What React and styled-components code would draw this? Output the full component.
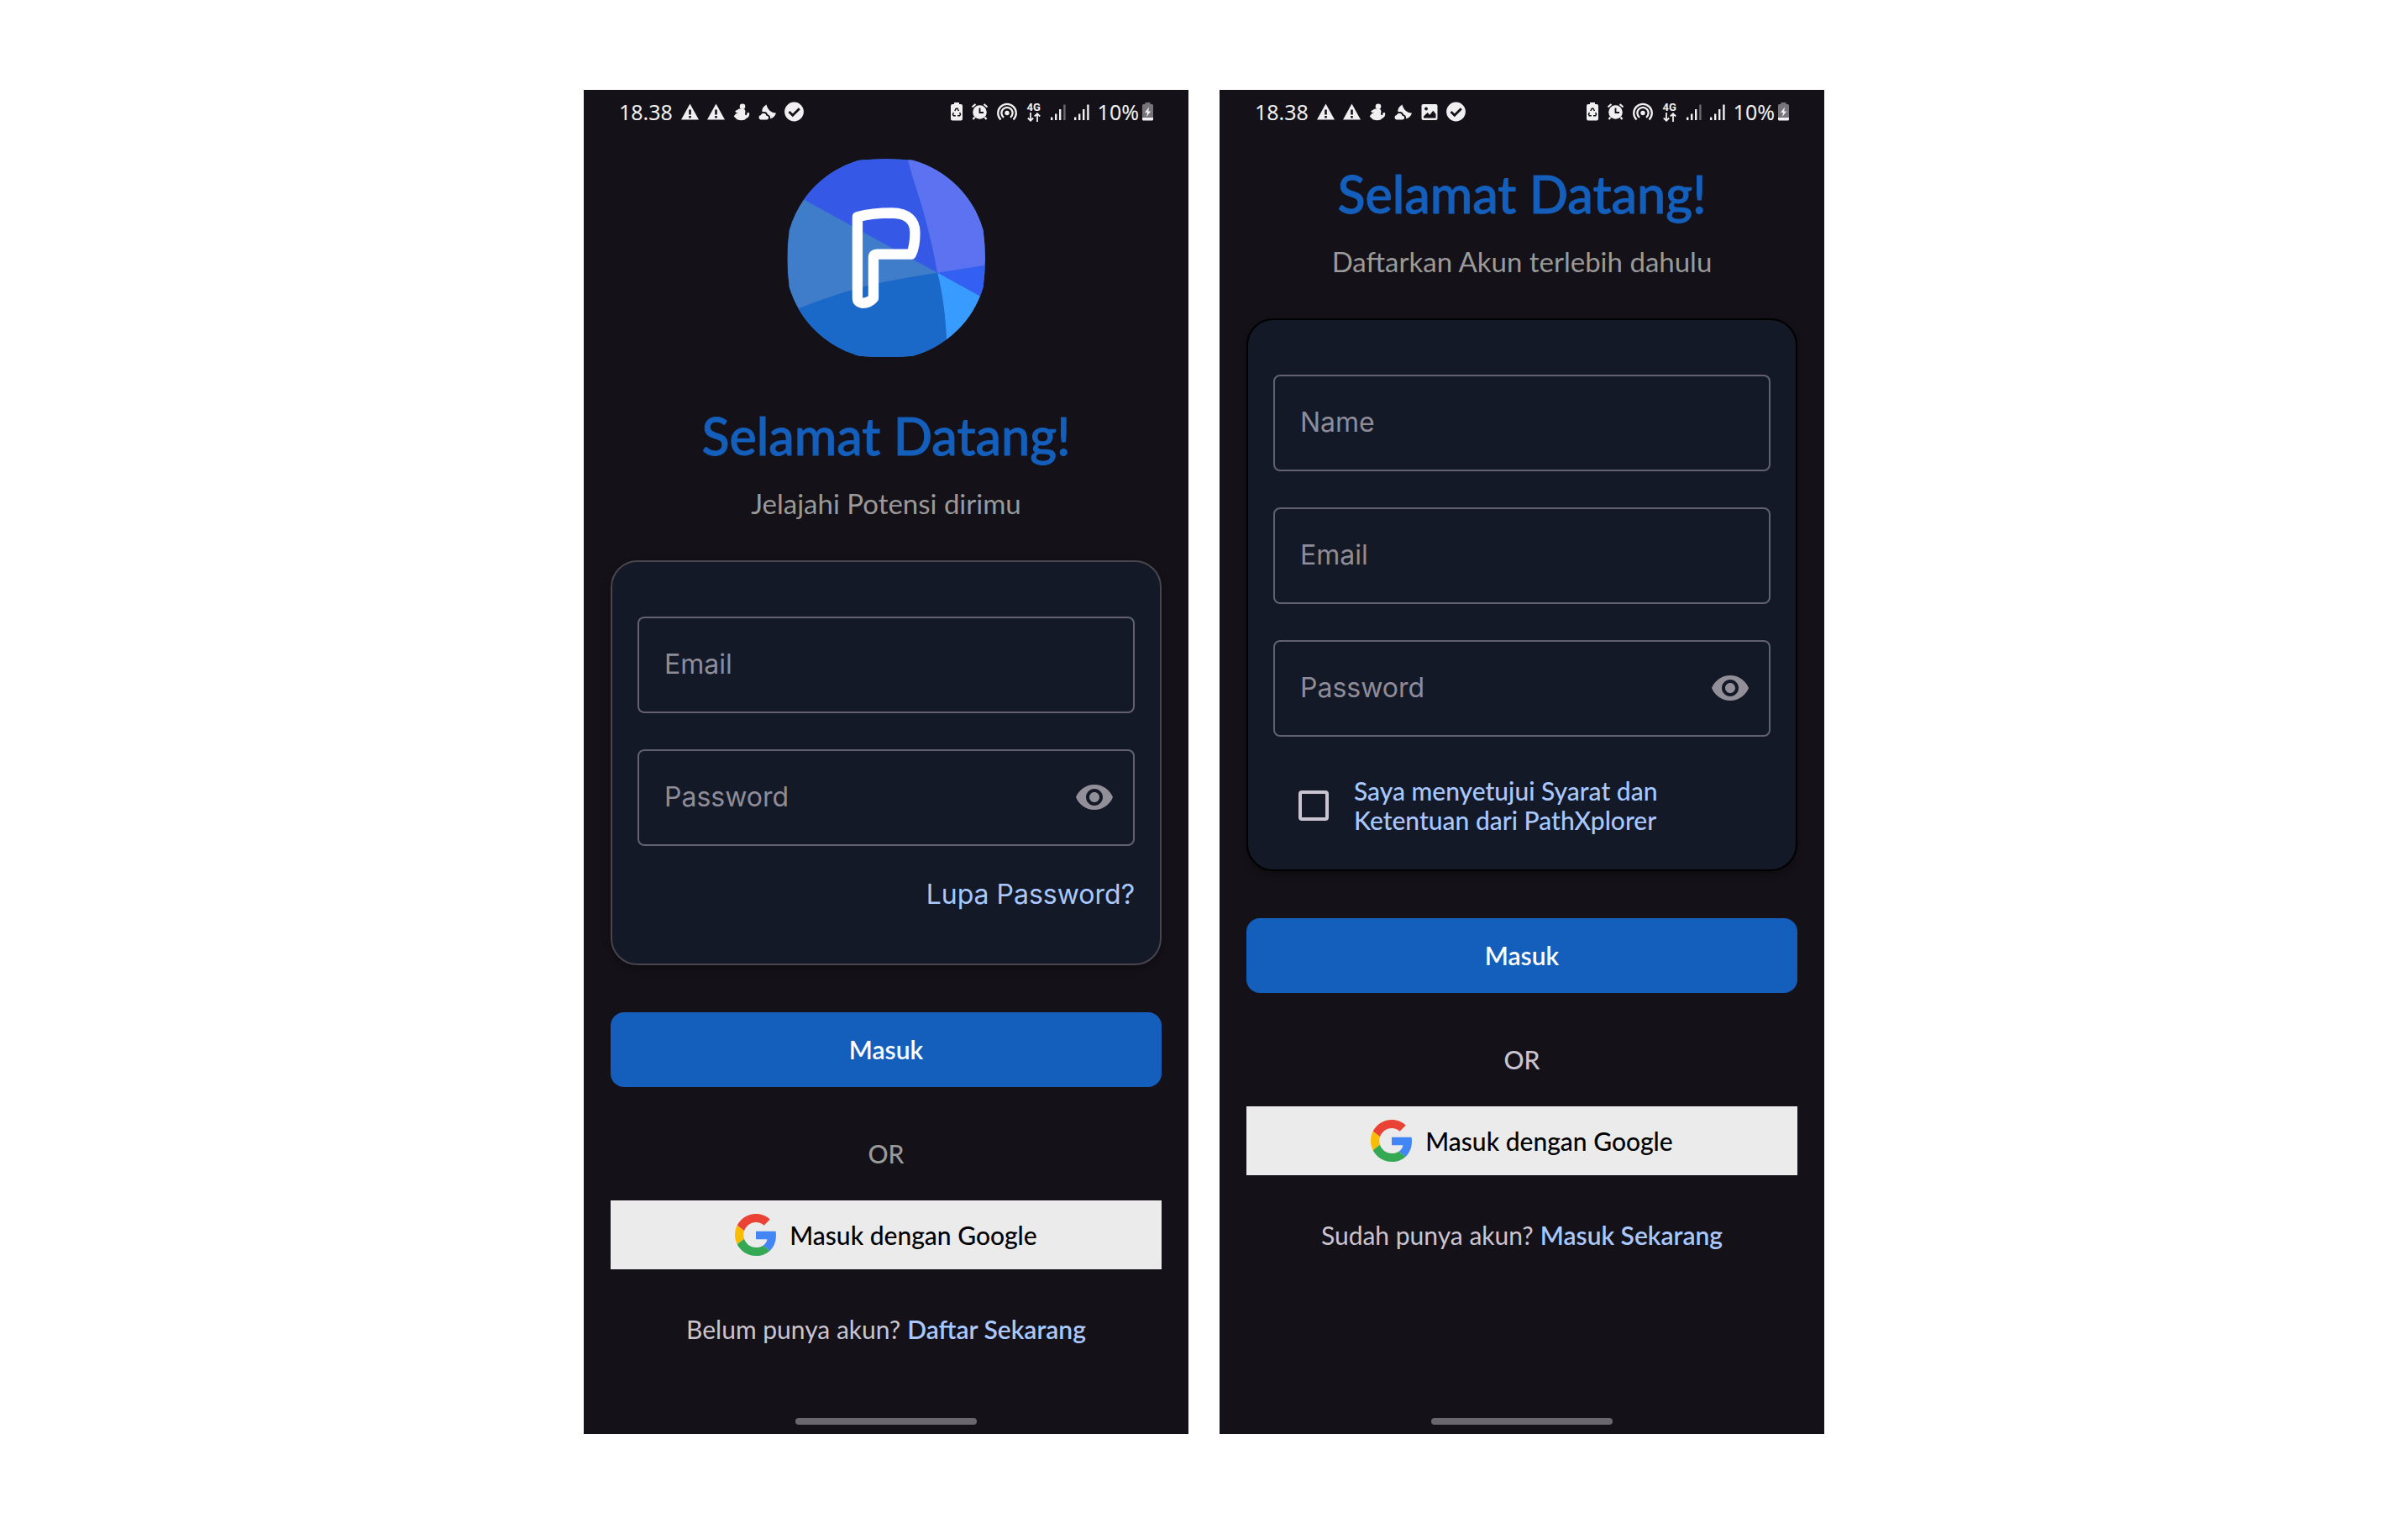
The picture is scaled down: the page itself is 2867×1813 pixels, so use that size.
import React, { useState } from "react";
import styled, { createGlobalStyle } from "styled-components";

const color = {
  phone: "#141118",
  card: "#131926",
  primary: "#145fbc",
  link: "#a8c8ff",
  muted: "#9a9a9a",
  soft: "#c9c4d0",
  hint: "#8f8c99",
  fieldLine: "#63616f",
  cardLine: "#48454e",
  icon: "#f0f0f0",
};

const GlobalStyle = createGlobalStyle`
  *, *::before, *::after { box-sizing: border-box; }
  body {
    margin: 0;
    background: #ffffff;
    font-family: Lato, "Open Sans", sans-serif;
  }
`;

const Page = styled.main`
  min-height: 100vh;
  padding: 32px;
  display: flex;
  justify-content: center;
  align-items: center;
  gap: 37px;
`;

const Phone = styled.section`
  flex: 0 1 720px;
  min-width: 0;
  aspect-ratio: 9 / 20;
  display: flex;
  flex-direction: column;
  align-items: stretch;
  background: ${color.phone};
`;

const StatusBar = styled.header`
  height: 53px;
  padding: 0 42px;
  display: flex;
  justify-content: space-between;
  align-items: center;
  color: ${color.icon};
  font-family: "Noto Sans", sans-serif;
  font-size: 25px;
  line-height: 32px;
`;

const StatusGroup = styled.div`
  display: flex;
  align-items: center;
  gap: ${(p) => (p.$tight ? "4px" : "10px")};

  svg { display: block; }
`;

const Network = styled.span`
  width: 20px;
  display: flex;
  flex-direction: column;
  align-items: center;
  font-family: Roboto, sans-serif;
  font-size: 13px;
  font-weight: 700;
  line-height: 12px;
`;

const Screen = styled.div`
  flex: 1;
  padding: ${(p) => (p.$withLogo ? "29px" : "35px")} 32px 0;
  display: flex;
  flex-direction: column;
`;

const LogoSlot = styled.div`
  display: flex;
  justify-content: center;
  margin-bottom: 58px;

  svg { display: block; }
`;

const Title = styled.h1`
  margin: 0 0 20px;
  color: ${color.primary};
  font-size: 61px;
  font-weight: 500;
  line-height: 72px;
  text-align: center;
  -webkit-text-stroke: 1px ${color.primary};
`;

const Subtitle = styled.p`
  margin: 0 0 44px;
  color: ${color.muted};
  font-size: 33px;
  line-height: 48px;
  text-align: center;
`;

const Form = styled.form`
  display: flex;
  flex-direction: column;
`;

const Card = styled.div`
  padding: 65px 30px ${(p) => (p.$roomy ? "58px" : "41px")};
  display: flex;
  flex-direction: column;
  gap: 43px;
  background: ${color.card};
  border: 2px solid ${(p) => (p.$outlined ? color.cardLine : "#000000")};
  border-radius: 32px;
  box-shadow: 0 4px 8px rgba(0, 0, 0, 0.3);
`;

const FieldBox = styled.label`
  height: 115px;
  padding: 0 22px 0 30px;
  display: flex;
  align-items: center;
  border: 2px solid ${color.fieldLine};
  border-radius: 8px;
`;

const FieldInput = styled.input`
  flex: 1;
  min-width: 0;
  padding: 0;
  border: 0;
  outline: 0;
  background: transparent;
  color: #e6e0e9;
  font-family: Inter, sans-serif;
  font-size: 32px;
  line-height: 48px;

  &::placeholder { color: ${color.hint}; opacity: 1; }
`;

const IconButton = styled.button`
  padding: 0;
  border: 0;
  background: transparent;
  color: #938f99;
  cursor: pointer;

  svg { display: block; }
`;

const TextLink = styled.a`
  color: ${color.link};
  text-decoration: none;
  font-weight: ${(p) => (p.$strong ? 600 : 400)};
`;

const ForgotRow = styled.div`
  margin-top: -9px;
  font-family: Inter, sans-serif;
  font-size: 32px;
  line-height: 48px;
  text-align: right;
`;

const Terms = styled.label`
  margin-top: 4px;
  padding-left: 30px;
  display: flex;
  align-items: center;
  gap: 30px;
  color: ${color.link};
  font-size: 30px;
  font-weight: 500;
  line-height: 35px;
`;

const TermsText = styled.span`
  max-width: 400px;
`;

const CheckBox = styled.input`
  appearance: none;
  flex: none;
  width: 36px;
  height: 36px;
  margin: 0;
  border: 4px solid ${color.soft};
  border-radius: 4px;

  &:checked { background: ${color.primary}; }
`;

const PrimaryButton = styled.button`
  height: 89px;
  margin: 56px 0 61px;
  padding: 0;
  border: 0;
  border-radius: 16px;
  background: ${color.primary};
  color: #ffffff;
  font-family: inherit;
  font-size: 30px;
  font-weight: 600;
  line-height: 36px;
  cursor: pointer;
`;

const Divider = styled.p`
  margin: 0 0 38px;
  color: ${(p) => (p.$bright ? color.soft : color.muted)};
  font-size: 30px;
  font-weight: 500;
  line-height: 36px;
  text-align: center;
`;

const GoogleButton = styled.button`
  height: 82px;
  padding: 0;
  display: flex;
  justify-content: center;
  align-items: center;
  gap: 16px;
  border: 0;
  background: #ebebeb;
  color: #000000;
  font-family: inherit;
  font-size: 30px;
  font-weight: 500;
  line-height: 36px;
  cursor: pointer;
`;

const Footer = styled.p`
  margin: 53px 0 0;
  display: flex;
  justify-content: center;
  gap: 8px;
  color: ${color.soft};
  font-size: 30px;
  line-height: 36px;
`;

const HomeBar = styled.div`
  width: 30%;
  height: 8px;
  margin: 0 auto 11px;
  border-radius: 4px;
  background: #6a686e;
`;

const WarningIcon = () => (
  <svg width="21" height="24" viewBox="0 0 21 24" aria-hidden="true">
    <path d="M10.5 2.500 21 21.500H0Z" fill={color.icon} />
    <path d="M9.200 9.500h2.600v6H9.200zM9.200 17h2.600v2.400H9.200z" fill={color.phone} />
  </svg>
);

const FigureIcon = () => (
  <svg width="20" height="24" viewBox="0 0 20 24" fill={color.icon} aria-hidden="true">
    <circle cx="11" cy="5.800" r="3.300" />
    <path d="M7 8.500h5.500c1.800 1 2.300 2.800 1.700 4.800-.4 1.600 0 3 1 3 1 0 1.400-1.200 1-2.800l2.800-.5c.8 3.500-.8 6-3.600 7-1 1.500-3 2.200-5.400 2.200-4 0-6.200-.8-6.600-2.200L.8 17.800c.6-2.300 3-3.800 5.400-5l-2.700.4-1.300-2Z" />
  </svg>
);

const MoonCloudIcon = () => (
  <svg width="21" height="24" viewBox="0 0 21 24" fill={color.icon} aria-hidden="true">
    <path d="M9.500 3.500C5.500 6 3.800 9 4.500 12.300c3-1 6 0 6.500 3 2.300.5 3.500 2.500 3 5C17.500 19.500 20 17 21 13.500 16 14 10.800 9.500 9.500 3.500Z" />
    <path d="M3 21.500c-3.200 0-3.300-5.200 0-5.400 1-3.300 6-2.800 6.400.6 3.600-.2 3.600 4.800.2 4.800Z" />
  </svg>
);

const PictureIcon = () => (
  <svg width="21" height="24" viewBox="0 0 21 24" aria-hidden="true">
    <rect x="1.500" y="3" width="19" height="19" rx="2" fill={color.icon} />
    <circle cx="7" cy="8.500" r="1.900" fill={color.phone} />
    <path d="M4 17.500 8.500 13l2.800 2.700 4-5 3.200 4v4.800H4Z" fill={color.phone} />
  </svg>
);

const DoneIcon = () => (
  <svg width="23" height="24" viewBox="0 0 23 24" aria-hidden="true">
    <circle cx="11.500" cy="12" r="11.400" fill={color.icon} />
    <path d="m5.500 12 4.300 4.300 8-8" fill="none" stroke={color.phone} strokeWidth="2.800" />
  </svg>
);

const RecycleBatteryIcon = () => (
  <svg width="14" height="24" viewBox="0 0 14 24" aria-hidden="true">
    <path d="M4 1h6v2h2a2 2 0 0 1 2 2v15.500a2 2 0 0 1-2 2H2a2 2 0 0 1-2-2V5a2 2 0 0 1 2-2h2Z" fill={color.icon} />
    <path d="m4.800 11 1.500-2.800h1.600L9.400 11M10.600 13l1 2.200-1 1.600H8M5.800 16.800H3.300l-.9-1.600 1-2.200" fill="none" stroke={color.phone} strokeWidth="1.500" />
  </svg>
);

const AlarmIcon = () => (
  <svg width="21" height="24" viewBox="0 0 21 24" aria-hidden="true">
    <circle cx="10.500" cy="12.500" r="8.300" fill={color.icon} />
    <path d="M1.500 6.500 5.500 3M19.500 6.500 15.500 3M4.500 18.500 2.500 21M16.500 18.500l2 2.500" stroke={color.icon} strokeWidth="2.200" />
    <path d="M10.500 7.500v5.500h4.500" fill="none" stroke={color.phone} strokeWidth="1.900" />
  </svg>
);

const HotspotIcon = () => (
  <svg width="24" height="24" viewBox="0 0 24 24" fill="none" stroke={color.icon} strokeWidth="2.300" aria-hidden="true">
    <circle cx="12" cy="13.500" r="2.700" fill={color.icon} stroke="none" />
    <path d="M4.500 21.500a10.800 10.800 0 1 1 15 0M8 18.800a6.600 6.600 0 1 1 8 0" />
  </svg>
);

const DataArrows = () => (
  <svg width="16" height="11" viewBox="0 0 16 11" fill="none" stroke={color.icon} strokeWidth="1.800" aria-hidden="true">
    <path d="M4 0v9.500M.8 6.500 4 9.700l3.200-3.200M12 11V1.500M8.800 4.500 12 1.300l3.200 3.200" />
  </svg>
);

const SignalIcon = ({ weak }) => (
  <svg width="18" height="24" viewBox="0 0 18 24" fill={color.icon} aria-hidden="true">
    <path d="M0 18.500h2.400V22H0zM5 14.500h2.400V22H5zM10 9h2.400v13H10z" />
    <path d="M15.200 3.500h2.400V22h-2.400z" opacity={weak ? 0.4 : 1} />
  </svg>
);

const ChargeBatteryIcon = () => (
  <svg width="13" height="24" viewBox="0 0 13 24" aria-hidden="true">
    <path d="M3.500 1h6v2h2A1.500 1.500 0 0 1 13 4.500V19H0V4.500A1.500 1.500 0 0 1 1.500 3h2Z" fill="#77757a" />
    <path d="M0 19h13v2a1.500 1.500 0 0 1-1.500 1.500h-10A1.500 1.500 0 0 1 0 21Z" fill={color.icon} />
    <path d="M8 6.500 3 13h3l-1 5 5.200-6.500H7.200Z" fill={color.icon} />
  </svg>
);

const EyeIcon = () => (
  <svg width="48" height="48" viewBox="0 0 24 24" fill="currentColor" aria-hidden="true">
    <path d="M12 4.500C7 4.500 2.730 7.610 1 12c1.730 4.390 6 7.500 11 7.500s9.270-3.110 11-7.500c-1.730-4.390-6-7.500-11-7.500zM12 17c-2.760 0-5-2.240-5-5s2.240-5 5-5 5 2.240 5 5-2.240 5-5 5zm0-8c-1.660 0-3 1.340-3 3s1.340 3 3 3 3-1.340 3-3-1.340-3-3-3z" />
  </svg>
);

const GoogleIcon = () => (
  <svg width="49" height="50" viewBox="0 0 47 48" aria-hidden="true">
    <path fill="#EA4335" d="M24 9.500c3.540 0 6.710 1.220 9.210 3.600l6.850-6.850C35.900 2.380 30.470 0 24 0 14.620 0 6.510 5.380 2.560 13.220l7.980 6.190C12.430 13.720 17.740 9.500 24 9.500z" />
    <path fill="#4285F4" d="M46.980 24.550c0-1.570-.15-3.090-.38-4.550H24v9.020h12.940c-.58 2.960-2.260 5.480-4.780 7.180l7.730 6c4.510-4.180 7.090-10.360 7.090-17.650z" />
    <path fill="#FBBC05" d="M10.530 28.590c-.48-1.450-.76-2.990-.76-4.590s.27-3.140.76-4.590l-7.980-6.190C.92 16.460 0 20.120 0 24c0 3.880.92 7.540 2.560 10.780l7.970-6.190z" />
    <path fill="#34A853" d="M24 48c6.480 0 11.930-2.130 15.890-5.810l-7.730-6c-2.150 1.450-4.920 2.300-8.160 2.300-6.260 0-11.570-4.220-13.470-9.910l-7.980 6.190C6.510 42.620 14.620 48 24 48z" />
  </svg>
);

const Logo = () => (
  <svg width="236" height="236" viewBox="52 57 706 706" role="img" aria-label="PathXplorer">
    <clipPath id="logo-disc">
      <path d="M310 62Q405 53 500 62A361 361 0 0 1 751 312Q764 410 751 514A361 361 0 0 1 500 759Q405 768 310 759A361 361 0 0 1 60 514Q46 410 60 312A361 361 0 0 1 310 62Z" />
    </clipPath>
    <g clipPath="url(#logo-disc)">
      <path d="M40 40H780V780H40Z" fill="#3f7cc9" />
      <path d="M588 463 40 163V40H477Q495 110 520 185 565 330 588 463Z" fill="#3559e6" />
      <path d="M477 40H780V433L588 463Q565 330 520 185 495 110 477 40Z" fill="#5c72f1" />
      <path d="M588 463 780 433V569Z" fill="#335ff3" />
      <path d="M588 463 780 569V780H622Q622 600 588 463Z" fill="#389bff" />
      <path d="M588 463Q622 600 622 780H40V612Q200 545 345 507 470 480 588 463Z" fill="#1a69c8" />
    </g>
    <path
      d="M303 264Q355 250 425 250 508 252 508 320 508 370 494 397H372Q360 397 360 408V553Q345 571 322 571 303 568 303 552Z"
      fill="none"
      stroke="#ffffff"
      strokeWidth="37"
      strokeLinejoin="round"
    />
  </svg>
);

function PhoneStatus({ withPicture }) {
  return (
    <StatusBar>
      <StatusGroup>
        <span>18.38</span>
        <WarningIcon />
        <WarningIcon />
        <FigureIcon />
        <MoonCloudIcon />
        {withPicture && <PictureIcon />}
        <DoneIcon />
      </StatusGroup>
      <StatusGroup>
        <RecycleBatteryIcon />
        <AlarmIcon />
        <HotspotIcon />
        <Network>
          4G
          <DataArrows />
        </Network>
        <SignalIcon weak />
        <SignalIcon />
        <StatusGroup $tight>
          <span>10%</span>
          <ChargeBatteryIcon />
        </StatusGroup>
      </StatusGroup>
    </StatusBar>
  );
}

function Field({ label, type = "text" }) {
  return (
    <FieldBox>
      <FieldInput type={type} placeholder={label} aria-label={label} />
    </FieldBox>
  );
}

function PasswordField() {
  const [shown, setShown] = useState(false);
  return (
    <FieldBox>
      <FieldInput type={shown ? "text" : "password"} placeholder="Password" aria-label="Password" />
      <IconButton type="button" aria-label="Password" onClick={() => setShown(!shown)}>
        <EyeIcon />
      </IconButton>
    </FieldBox>
  );
}

function Actions({ bright, question, action }) {
  return (
    <>
      <PrimaryButton type="submit">Masuk</PrimaryButton>
      <Divider $bright={bright}>OR</Divider>
      <GoogleButton type="button">
        <GoogleIcon />
        Masuk dengan Google
      </GoogleButton>
      <Footer>
        {question}
        <TextLink href="#" $strong>{action}</TextLink>
      </Footer>
    </>
  );
}

const stop = (event) => event.preventDefault();

function LoginScreen() {
  return (
    <Phone>
      <PhoneStatus />
      <Screen $withLogo>
        <LogoSlot>
          <Logo />
        </LogoSlot>
        <Title>Selamat Datang!</Title>
        <Subtitle>Jelajahi Potensi dirimu</Subtitle>
        <Form onSubmit={stop}>
          <Card $outlined $roomy>
            <Field label="Email" type="email" />
            <PasswordField />
            <ForgotRow>
              <TextLink href="#">Lupa Password?</TextLink>
            </ForgotRow>
          </Card>
          <Actions question="Belum punya akun?" action="Daftar Sekarang" />
        </Form>
      </Screen>
      <HomeBar />
    </Phone>
  );
}

function RegisterScreen() {
  return (
    <Phone>
      <PhoneStatus withPicture />
      <Screen>
        <Title>Selamat Datang!</Title>
        <Subtitle>Daftarkan Akun terlebih dahulu</Subtitle>
        <Form onSubmit={stop}>
          <Card>
            <Field label="Name" />
            <Field label="Email" type="email" />
            <PasswordField />
            <Terms>
              <CheckBox type="checkbox" />
              <TermsText>Saya menyetujui Syarat dan Ketentuan dari PathXplorer</TermsText>
            </Terms>
          </Card>
          <Actions bright question="Sudah punya akun?" action="Masuk Sekarang" />
        </Form>
      </Screen>
      <HomeBar />
    </Phone>
  );
}

export default function App() {
  return (
    <>
      <GlobalStyle />
      <Page>
        <LoginScreen />
        <RegisterScreen />
      </Page>
    </>
  );
}
